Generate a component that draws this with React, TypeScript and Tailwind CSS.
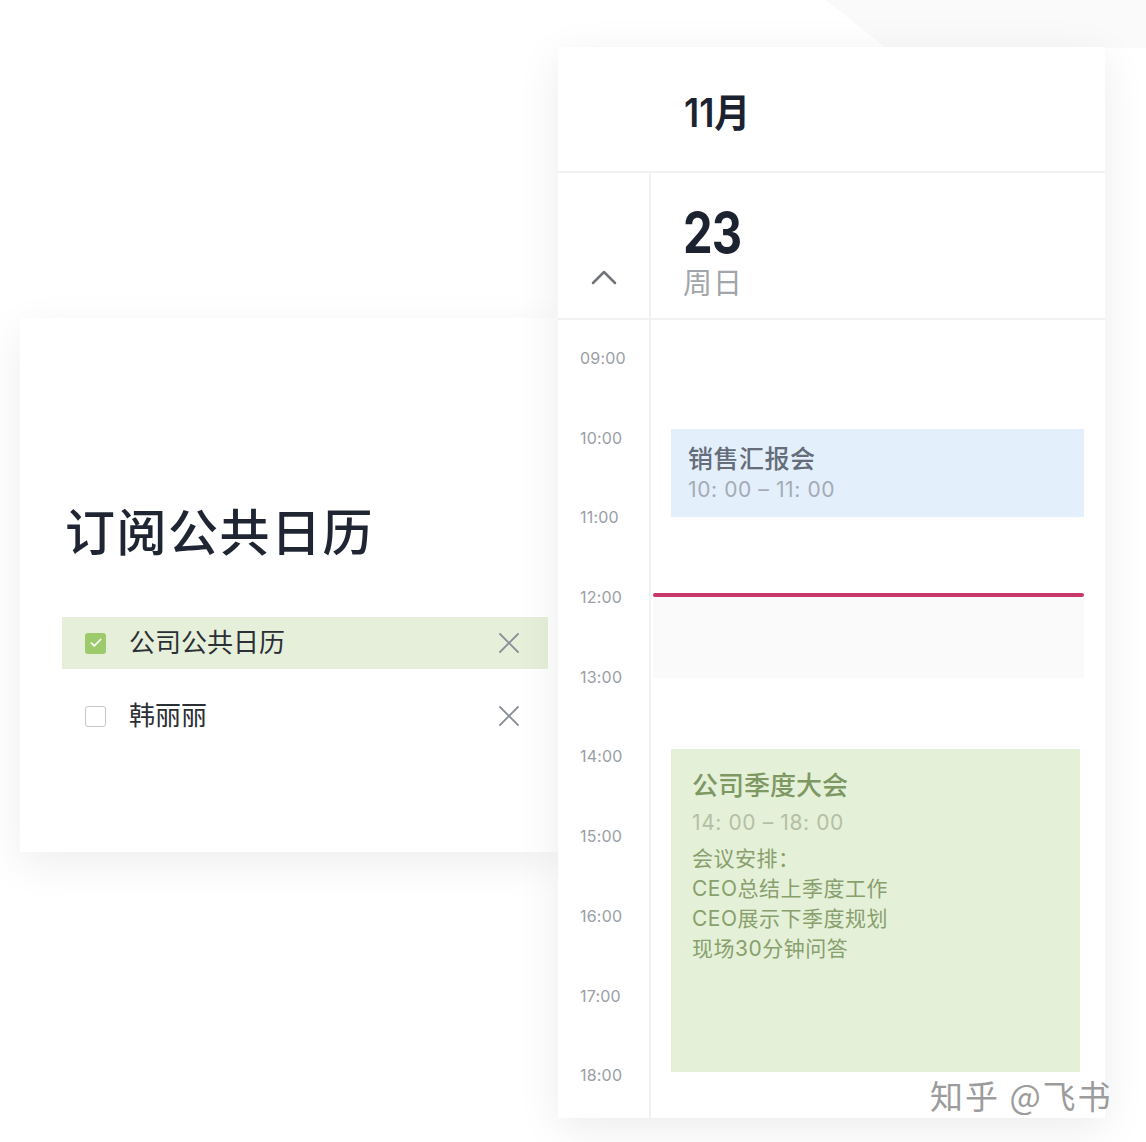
import { X, Check } from 'lucide-react';

const hours = ['09:00', '10:00', '11:00', '12:00', '13:00', '14:00', '15:00', '16:00', '17:00', '18:00'];

interface CalendarRow {
  name: string;
  checked: boolean;
}

const calendars: CalendarRow[] = [
  { name: '公司公共日历', checked: true },
  { name: '韩丽丽', checked: false },
];

function SubscribeCard() {
  return (
    <div className="mt-[318px] w-[538px] h-[534px] shrink-0 bg-white shadow-[0_12px_40px_rgba(0,0,0,0.07)] pt-[180px]">
      <h1 className="pl-[45px] text-[50px] leading-[70px] font-medium text-[#1f2532] tracking-[1.5px]">订阅公共日历</h1>
      <div className="mt-[49px] ml-[42px] mr-[10px] flex flex-col gap-[21px]">
        {calendars.map((c) => (
          <div
            key={c.name}
            className={`h-[52px] flex items-center pl-[23px] pr-[30px] ${c.checked ? 'bg-[#e6efd9]' : ''}`}
          >
            {c.checked ? (
              <span className="w-[21px] h-[21px] rounded-[3px] bg-[#9dca6b] flex items-center justify-center">
                <Check className="w-[14px] h-[14px] text-white" strokeWidth={3} />
              </span>
            ) : (
              <span className="w-[21px] h-[21px] rounded-[3px] border-[1.5px] border-[#c4c6cc] bg-white" />
            )}
            <span className="ml-[23px] flex-1 text-[26px] leading-none text-[#2b2f36]">{c.name}</span>
            <X className="w-[36px] h-[36px] -mr-[9px] text-[#8a8f99]" strokeWidth={1.2} />
          </div>
        ))}
      </div>
    </div>
  );
}

function DayView() {
  return (
    <div className="mt-[47px] w-[547px] h-[1071px] shrink-0 bg-white shadow-[0_10px_40px_rgba(0,0,0,0.08)] flex flex-col">
      <div className="h-[126px] shrink-0 border-b-2 border-[#f0f1f2] flex items-center pl-[126px] pt-[6px]">
        <span className="text-[39px] font-semibold text-[#1c2230] leading-none inline-block scale-x-[0.92] origin-left">11月</span>
      </div>

      <div className="h-[147px] shrink-0 border-b-2 border-[#f0f1f2] flex">
        <div className="w-[93px] shrink-0 border-r-2 border-[#f0f1f2] flex items-end justify-center pb-[33px]">
          <svg width="26" height="16" viewBox="0 0 26 16" fill="none">
            <path d="M2 14 L13 3 L24 14" stroke="#707379" strokeWidth="2.5" strokeLinecap="round" strokeLinejoin="round" />
          </svg>
        </div>
        <div className="pl-[32px] pt-[30px] flex flex-col">
          <span className="text-[56px] font-bold text-[#1c2230] leading-[60px] tracking-[-1px] inline-block scale-x-[0.84] origin-left">23</span>
          <span className="text-[29px] text-[#a2a5aa] leading-[40px] mt-[1px] tracking-[1px]">周日</span>
        </div>
      </div>

      <div className="flex flex-1 min-h-0">
        <div className="w-[93px] shrink-0 border-r-2 border-[#f0f1f2] pt-[28px] pl-[22px]">
          {hours.map((h) => (
            <div key={h} className="h-[79.7px] text-[16px] leading-5 text-[#9a9ea6] tracking-[0.2px]">
              {h}
            </div>
          ))}
        </div>

        <div className="flex-1 flex flex-col">
          <div className="mt-[109px] ml-[20px] mr-[21px] h-[88px] bg-[#e4effc] pl-[17px] pt-[13px]">
            <div className="text-[25px] leading-[34px] font-medium text-[#646d79] tracking-[0.5px]">销售汇报会</div>
            <div className="text-[21px] leading-[28px] text-[#a3abb5] tracking-[0.6px]">10: 00 – 11: 00</div>
          </div>

          <div className="mt-[76px] ml-[2px] mr-[21px] h-[4px] rounded-full bg-[#c9386a]" />
          <div className="ml-[2px] mr-[21px] h-[81px] bg-[#fafafa]" />

          <div className="mt-[71px] ml-[20px] mr-[25px] h-[323px] bg-[#e5f0d8] pl-[21px] pt-[20px]">
            <div className="text-[26px] leading-[34px] font-medium text-[#7d9863]">公司季度大会</div>
            <div className="text-[21px] leading-[30px] mt-[5px] text-[#b3c0a5] tracking-[0.6px]">14: 00 – 18: 00</div>
            <div className="mt-[6px] text-[21px] leading-[30px] text-[#88a06d] tracking-[0.5px]">
              <div>会议安排：</div>
              <div>CEO总结上季度工作</div>
              <div>CEO展示下季度规划</div>
              <div>现场30分钟问答</div>
            </div>
          </div>
        </div>
      </div>
    </div>
  );
}

export default function App() {
  return (
    <div className="relative w-[1146px] h-[1142px] bg-white overflow-hidden font-['Inter','Noto_Sans_CJK_SC',sans-serif]">
      <svg className="absolute top-0 right-0" width="360" height="48" viewBox="0 0 360 48">
        <polygon points="40,0 360,0 360,48 100,48" fill="#fafafa" />
      </svg>
      <div className="relative flex items-start pl-[20px]">
        <SubscribeCard />
        <DayView />
      </div>
      <div className="absolute left-[930px] top-[1073px] text-[33px] leading-[44px] text-[#9c9c9c] tracking-[2px] [text-shadow:0_0_2px_#fff] whitespace-nowrap font-['Noto_Sans_CJK_SC',sans-serif]">
        知乎 @飞书
      </div>
    </div>
  );
}
